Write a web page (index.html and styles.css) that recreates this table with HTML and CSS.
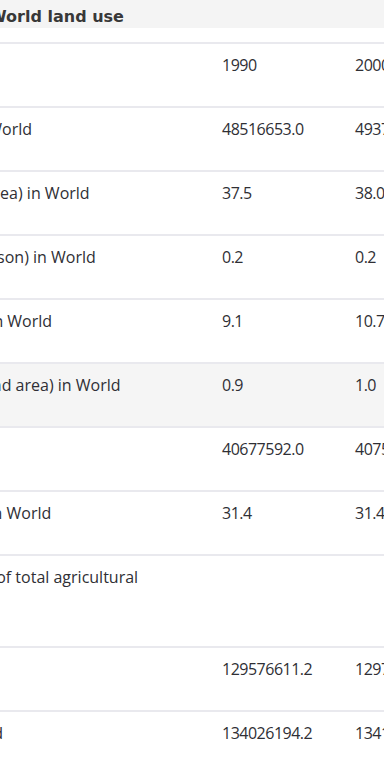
FILE: index.html
```html
<!DOCTYPE html>
<html>
<head>
<meta charset="utf-8">
<link rel="stylesheet" href="styles.css">
</head>
<body>
<div class="viewport">
  <div class="panel">
    <h2 class="title">World land use</h2>
    <table class="data">
      <tr class="head"><td class="label"></td><td class="val">1990</td><td class="val">2000</td><td class="val">2010</td></tr>
      <tr><td class="label">Agricultural land (sq. km) in World</td><td class="val">48516653.0</td><td class="val">49371802.6</td><td class="val">48830546.1</td></tr>
      <tr><td class="label">Agricultural land (% of land area) in World</td><td class="val">37.5</td><td class="val">38.0</td><td class="val">37.7</td></tr>
      <tr><td class="label">Arable land (hectares per person) in World</td><td class="val">0.2</td><td class="val">0.2</td><td class="val">0.2</td></tr>
      <tr><td class="label">Arable land (% of land area) in World</td><td class="val">9.1</td><td class="val">10.7</td><td class="val">10.9</td></tr>
      <tr class="hover"><td class="label">Permanent cropland (% of land area) in World</td><td class="val">0.9</td><td class="val">1.0</td><td class="val">1.2</td></tr>
      <tr><td class="label">Forest area (sq. km) in World</td><td class="val">40677592.0</td><td class="val">40757170.0</td><td class="val">40233316.0</td></tr>
      <tr><td class="label">Forest area (% of land area) in World</td><td class="val">31.4</td><td class="val">31.4</td><td class="val">31.0</td></tr>
      <tr class="tall"><td class="label">Agricultural irrigated land (% of total agricultural land) in World</td><td class="val"></td><td class="val"></td><td class="val"></td></tr>
      <tr><td class="label">Land area (sq. km) in World</td><td class="val">129576611.2</td><td class="val">129731221.3</td><td class="val">129733172.7</td></tr>
      <tr><td class="label">Surface area (sq. km) in World</td><td class="val">134026194.2</td><td class="val">134182354.3</td><td class="val">134325130.0</td></tr>
    </table>
  </div>
</div>
</body>
</html>
```

FILE: styles.css
```css
html, body {
  margin: 0;
  padding: 0;
  background: #ffffff;
}
.viewport {
  width: 384px;
  height: 768px;
  overflow: hidden;
}
.panel {
  margin-left: -220px;
  width: 900px;
}
.title {
  margin: 0 0 14px 0;
  height: 28px;
  padding: 5px 0 0 209px;
  box-sizing: border-box;
  background: #f4f4f4;
  font-family: "DejaVu Sans", sans-serif;
  font-weight: bold;
  font-size: 16px;
  line-height: 24px;
  color: #383838;
}
.data {
  border-collapse: collapse;
  table-layout: fixed;
  font-family: "Open Sans", sans-serif;
  font-size: 16px;
  line-height: 28px;
  color: #2f2f35;
}
.data td {
  border-top: 2px solid #e9e9ee;
  padding: 7px 0 27px 0;
  vertical-align: top;
  white-space: nowrap;
}
.data td.label {
  width: 380px;
  padding-right: 42px;
  white-space: normal;
}
.data td.val {
  width: 113px;
  padding-left: 20px;
  letter-spacing: -0.5px;
}
.data tr.hover td {
  background: #f5f5f5;
}
```
